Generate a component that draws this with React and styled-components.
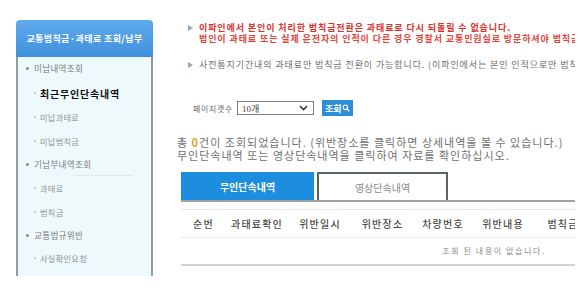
import React from "react";
import styled, { createGlobalStyle } from "styled-components";

const Global = createGlobalStyle`
  html, body { margin: 0; padding: 0; background: #ffffff; }
  body { font-family: "Noto Sans CJK KR", "Noto Sans", sans-serif; }
  * { box-sizing: border-box; }
`;

const Page = styled.div`
  display: flex;
  align-items: flex-start;
  width: 586px;
  height: 288px;
  overflow: hidden;
  padding: 20px 0 0 16px;
`;

const Sidebar = styled.aside`
  width: 137px;
  flex: none;
  display: flex;
  flex-direction: column;
`;

const SideHeader = styled.div`
  height: 37px;
  border-radius: 4px 4px 0 0;
  background: linear-gradient(#5eaaee, #4090dc);
  color: #fff;
  font-size: 9px;
  font-weight: 700;
  display: flex;
  align-items: center;
  justify-content: center;
  letter-spacing: 0.4px;
  white-space: nowrap;
`;

const SideBody = styled.ul`
  list-style: none;
  margin: 0;
  padding: 0 0 6px 0;
  background: #eef9fc;
  border-left: 2px solid #8f9ba0;
  border-right: 2px solid #8f9ba0;
  display: flex;
  flex-direction: column;
`;

const SideItem = styled.li`
  display: flex;
  align-items: center;
  height: ${(p) => (p.$top ? 22 : 24)}px;
  padding-left: ${(p) => (p.$top ? 8 : 16)}px;
  margin-top: ${(p) => p.$mt || 0}px;
  font-size: ${(p) => (p.$active ? 10 : p.$top ? 8.6 : 8.2)}px;
  letter-spacing: ${(p) => (p.$active ? 0.8 : 0.3)}px;
  font-weight: ${(p) => (p.$active ? 700 : 400)};
  color: ${(p) => (p.$active ? "#111" : p.$top ? "#7a7a7a" : "#8d9296")};
  white-space: nowrap;
`;

const Bullet = styled.span`
  display: inline-block;
  width: ${(p) => (p.$top ? 3 : 2)}px;
  height: ${(p) => (p.$top ? 3 : 2)}px;
  border-radius: 50%;
  background: ${(p) => (p.$top ? "#8a8a8a" : "#b5bcc0")};
  margin-right: ${(p) => (p.$top ? 5 : 4)}px;
  flex: none;
`;

const SideSep = styled.li`
  height: 1px;
  margin: 0 19px 0 54px;
  background: #e2e8ea;
`;

const Main = styled.main`
  margin-left: 23px;
  width: 399px;
  flex: none;
  overflow: hidden;
  display: flex;
  flex-direction: column;
`;

const Notice = styled.div`
  display: flex;
  align-items: flex-start;
  padding-left: 12px;
  margin-top: ${(p) => p.$mt}px;
`;

const Arrow = styled.span`
  width: 0;
  height: 0;
  border-top: 3px solid transparent;
  border-bottom: 3px solid transparent;
  border-left: 5px solid #9aa7b4;
  margin: 3px 6px 0 0;
  flex: none;
`;

const NoticeText = styled.div`
  display: flex;
  flex-direction: column;
  font-size: 9px;
  line-height: 11px;
  letter-spacing: 0.9px;
  white-space: nowrap;
  font-weight: ${(p) => (p.$warn ? 700 : 400)};
  color: ${(p) => (p.$warn ? "#d7322c" : "#6f6f6f")};
`;

const NoticeLine = styled.span`
  color: ${(p) => p.$color || "inherit"};
`;

const PageRow = styled.div`
  display: flex;
  align-items: center;
  padding-left: 17px;
  margin-top: 30px;
  height: 16px;
`;

const PageLabel = styled.span`
  font-size: 7.8px;
  letter-spacing: 0.8px;
  color: #666;
  margin-right: 4px;
  white-space: nowrap;
`;

const SelectBox = styled.div`
  width: 77px;
  height: 14px;
  border: 1px solid #7d7d7d;
  display: flex;
  align-items: center;
  justify-content: space-between;
  padding: 0 5px 0 4px;
  font-family: "Liberation Serif", "Noto Sans CJK KR", serif;
  font-size: 9px;
  color: #444;
  background: #fff;
`;

const SearchButton = styled.button`
  margin-left: 8px;
  height: 16px;
  padding: 0 3px;
  border: none;
  background: #2a8fd8;
  color: #fff;
  font-family: "Noto Sans CJK KR", sans-serif;
  font-size: 9px;
  font-weight: 700;
  display: flex;
  align-items: center;
  gap: 1px;
`;

const Summary = styled.div`
  margin-top: 20px;
  padding-left: 1px;
  font-size: 11px;
  line-height: 13px;
  letter-spacing: 1px;
  color: #707070;
  white-space: nowrap;
  display: flex;
  flex-direction: column;
`;

const Count = styled.span`
  color: #e6a321;
  font-weight: 700;
`;

const Tabs = styled.div`
  display: flex;
  gap: 3px;
  margin: 10px 0 0 5px;
  border-bottom: 2px solid #a0a0a0;
`;

const Tab = styled.div`
  width: ${(p) => (p.$active ? 133 : 131)}px;
  height: 28px;
  display: flex;
  align-items: center;
  justify-content: center;
  font-size: 10px;
  font-weight: ${(p) => (p.$active ? 700 : 400)};
  color: ${(p) => (p.$active ? "#fff" : "#8a8a8a")};
  background: ${(p) => (p.$active ? "#1c8ddf" : "#fff")};
  border: ${(p) => (p.$active ? "none" : "2px solid #5b6266")};
  border-bottom: none;
`;

const TableWrap = styled.div`
  margin: 7px 0 0 5px;
  width: 626px;
  flex: none;
`;

const Table = styled.table`
  width: 626px;
  border-collapse: collapse;
  table-layout: fixed;
`;

const Th = styled.th`
  height: 28px;
  padding: 0;
  font-size: 10px;
  font-weight: 500;
  color: #4a4a4a;
  letter-spacing: 1.2px;
  text-align: center;
  border-top: 1px solid #e6e6e6;
  border-bottom: 1px solid #ececec;
  white-space: nowrap;
`;

const Empty = styled.td`
  height: 27px;
  padding: 0;
  text-align: center;
  font-size: 8px;
  color: #8a8a8a;
  border-bottom: 2px solid #d2d2d2;
  letter-spacing: 1.6px;
`;

const columns = [
  ["순번", 45],
  ["과태료확인", 62],
  ["위반일시", 64],
  ["위반장소", 61],
  ["차량번호", 60],
  ["위반내용", 60],
  ["범칙금", 60],
  ["과태료", 60],
  ["납부상태", 77],
  ["비고", 77],
];

const menu = [
  { label: "미납내역조회", top: true },
  { label: "최근무인단속내역", active: true, mt: 2 },
  { label: "미납과태료" },
  { label: "미납범칙금" },
  { label: "기납부내역조회", top: true },
  { sep: true },
  { label: "과태료" },
  { label: "범칙금" },
  { label: "교통법규위반", top: true },
  { label: "사실확인요청" },
];

const Chevron = () => (
  <svg width="9" height="6" viewBox="0 0 9 6">
    <path d="M1 1 L4.5 4.5 L8 1" fill="none" stroke="#333" strokeWidth="1.6" />
  </svg>
);

const SearchIcon = () => (
  <svg width="8" height="8" viewBox="0 0 8 8">
    <circle cx="3.3" cy="3.3" r="2.3" fill="none" stroke="#fff" strokeWidth="1.2" />
    <path d="M5 5 L7.3 7.3" stroke="#fff" strokeWidth="1.3" />
  </svg>
);

export default function App() {
  return (
    <>
      <Global />
      <Page>
        <Sidebar>
          <SideHeader>교통범칙금·과태료 조회/납부</SideHeader>
          <SideBody>
            {menu.map((m, i) =>
              m.sep ? (
                <SideSep key={i} />
              ) : (
                <SideItem key={i} $top={m.top} $active={m.active} $mt={m.mt}>
                  <Bullet $top={m.top} />
                  {m.label}
                </SideItem>
              )
            )}
          </SideBody>
        </Sidebar>
        <Main>
          <Notice $mt={2}>
            <Arrow />
            <NoticeText $warn>
              <NoticeLine>이파인에서 본인이 처리한 범칙금전환은 과태료로 다시 되돌릴 수 없습니다.</NoticeLine>
              <NoticeLine $color="#e0453c">
                법인이 과태료 또는 실제 운전자의 인적이 다른 경우 경찰서 교통민원실로 방문하셔야 범칙금 전환이 가능합니다.
              </NoticeLine>
            </NoticeText>
          </Notice>
          <Notice $mt={15}>
            <Arrow />
            <NoticeText>
              <NoticeLine>
                사전통지기간내의 과태료만 범칙금 전환이 가능합니다. (이파인에서는 본인 인적으로만 범칙금 전환이 가능합니다.)
              </NoticeLine>
            </NoticeText>
          </Notice>
          <PageRow>
            <PageLabel>페이지갯수</PageLabel>
            <SelectBox>
              <span>10개</span>
              <Chevron />
            </SelectBox>
            <SearchButton type="button">
              조회
              <SearchIcon />
            </SearchButton>
          </PageRow>
          <Summary>
            <span>
              총 <Count>0</Count>건이 조회되었습니다. (위반장소를 클릭하면 상세내역을 볼 수 있습니다.)
            </span>
            <span>무인단속내역 또는 영상단속내역을 클릭하여 자료를 확인하십시오.</span>
          </Summary>
          <Tabs>
            <Tab $active>무인단속내역</Tab>
            <Tab>영상단속내역</Tab>
          </Tabs>
          <TableWrap>
            <Table>
              <colgroup>
                {columns.map(([, w], i) => (
                  <col key={i} style={{ width: w }} />
                ))}
              </colgroup>
              <thead>
                <tr>
                  {columns.map(([t], i) => (
                    <Th key={i}>{t}</Th>
                  ))}
                </tr>
              </thead>
              <tbody>
                <tr>
                  <Empty colSpan={columns.length}>조회 된 내용이 없습니다.</Empty>
                </tr>
              </tbody>
            </Table>
          </TableWrap>
        </Main>
      </Page>
    </>
  );
}
